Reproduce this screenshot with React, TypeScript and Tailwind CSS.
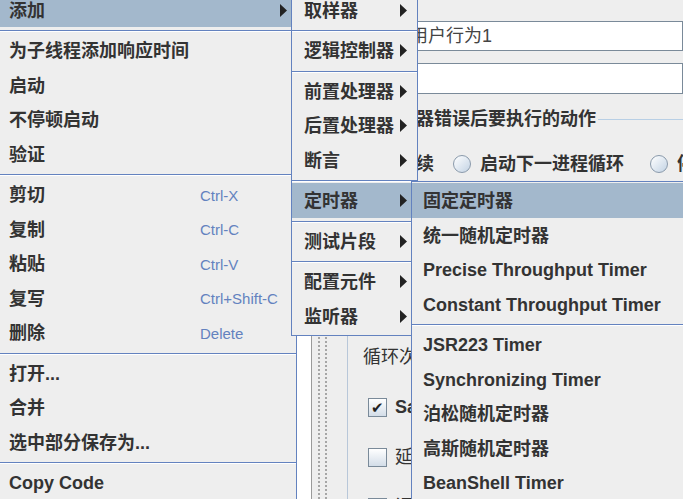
import React from "react";

type Entry =
  | { sep: true }
  | { label: string; shortcut?: string; arrow?: boolean; active?: boolean };

const mainMenu: Entry[] = [
  { label: "添加", arrow: true, active: true },
  { sep: true },
  { label: "为子线程添加响应时间" },
  { label: "启动" },
  { label: "不停顿启动" },
  { label: "验证" },
  { sep: true },
  { label: "剪切", shortcut: "Ctrl-X" },
  { label: "复制", shortcut: "Ctrl-C" },
  { label: "粘贴", shortcut: "Ctrl-V" },
  { label: "复写", shortcut: "Ctrl+Shift-C" },
  { label: "删除", shortcut: "Delete" },
  { sep: true },
  { label: "打开..." },
  { label: "合并" },
  { label: "选中部分保存为..." },
  { sep: true },
  { label: "Copy Code" },
];

const addMenu: Entry[] = [
  { label: "取样器", arrow: true },
  { sep: true },
  { label: "逻辑控制器", arrow: true },
  { sep: true },
  { label: "前置处理器", arrow: true },
  { label: "后置处理器", arrow: true },
  { label: "断言", arrow: true },
  { sep: true },
  { label: "定时器", arrow: true, active: true },
  { sep: true },
  { label: "测试片段", arrow: true },
  { sep: true },
  { label: "配置元件", arrow: true },
  { label: "监听器", arrow: true },
];

const timerMenu: Entry[] = [
  { label: "固定定时器", active: true },
  { label: "统一随机定时器" },
  { label: "Precise Throughput Timer" },
  { label: "Constant Throughput Timer" },
  { sep: true },
  { label: "JSR223 Timer" },
  { label: "Synchronizing Timer" },
  { label: "泊松随机定时器" },
  { label: "高斯随机定时器" },
  { label: "BeanShell Timer" },
];

function Arrow() {
  return (
    <svg width="7" height="13" viewBox="0 0 7 13" className="block shrink-0">
      <polygon points="0,0 7,6.5 0,13" fill="#222" />
    </svg>
  );
}

function Separator() {
  return (
    <div className="h-[6px] pt-[3px]">
      <div className="h-px bg-[#6382bf]" />
      <div className="h-px bg-white" />
    </div>
  );
}

function MenuList({ items, pl, pr, shortcutAt }: { items: Entry[]; pl: string; pr: string; shortcutAt?: string }) {
  return (
    <>
      {items.map((it, i) =>
        "sep" in it ? (
          <Separator key={i} />
        ) : (
          <div
            key={i}
            className={`flex h-[34.5px] items-center whitespace-nowrap pt-[3px] ${pl} ${pr} ${it.active ? "bg-[#a3b8cc]" : ""}`}
          >
            <span className={`text-[18px] font-bold text-[#333] ${shortcutAt ?? ""}`}>{it.label}</span>
            {it.shortcut && <span className="text-[15px] text-[#6382bf]">{it.shortcut}</span>}
            {it.arrow && (
              <span className="ml-auto -mt-[2px]">
                <Arrow />
              </span>
            )}
          </div>
        )
      )}
    </>
  );
}

function Radio() {
  return (
    <span className="block h-[18px] w-[18px] shrink-0 rounded-full border border-[#8a9aab] bg-gradient-to-br from-white to-[#c3d3e4]" />
  );
}

function Check({ checked }: { checked?: boolean }) {
  return (
    <span className="flex h-[19px] w-[19px] shrink-0 items-center justify-center border border-[#7a8a99] bg-gradient-to-b from-white to-[#d3dde8] text-[15px] leading-none text-[#222]">
      {checked ? "✔" : ""}
    </span>
  );
}

export default function App() {
  return (
    <div className="relative h-[499px] w-[683px] overflow-hidden bg-[#eeeeee] font-['Liberation_Sans','Noto_Sans_CJK_SC',sans-serif] text-[#333]">
      {/* JMeter window behind the popups */}
      <div className="flex h-full">
        <div className="w-[312px] border-r border-[#9a9a9a] bg-white" />
        <div className="w-[6px]" />
        <div className="w-[9px] border-x-2 border-dotted border-[#a6a6a6]" />
        <div className="w-[21px] border-r border-[#b8c7d9] bg-[#eeeeee]" />
        <div className="flex min-w-0 flex-1 flex-col text-[18px]">
          <div className="mt-[21px] flex h-[30px] items-stretch pl-[15px]">
            <span className="flex w-[43px] shrink-0 items-center font-bold">名称：</span>
            <div className="flex flex-1 items-center whitespace-nowrap border border-[#7a8a99] bg-white pl-[3px] text-[#444]">用户行为1</div>
          </div>
          <div className="mt-[12px] flex h-[31px] items-stretch pl-[15px]">
            <span className="flex w-[43px] shrink-0 items-center font-bold">注释：</span>
            <div className="flex-1 border border-[#7a8a99] bg-white" />
          </div>
          <div className="mt-[15px] flex h-[20px] items-center pl-[14px]">
            <span className="whitespace-nowrap font-bold">在取样器错误后要执行的动作</span>
            <div className="ml-[2px] h-px flex-1 bg-[#b8cfe5]" />
          </div>
          <div className="mt-[25px] flex h-[20px] items-center whitespace-nowrap pl-[23px] font-bold">
            <Radio />
            <span className="ml-[9px] w-[36px] shrink-0">继续</span>
            <span className="ml-[19px]"><Radio /></span>
            <span className="ml-[9px] w-[144px] shrink-0">启动下一进程循环</span>
            <span className="ml-[26px]"><Radio /></span>
            <span className="ml-[9px]">停止线程</span>
          </div>
          <div className="mt-[173px] flex h-[20px] items-center pl-[15px]">
            <span className="whitespace-nowrap">循环次数</span>
          </div>
          <div className="mt-[30px] flex h-[20px] items-center gap-[8px] whitespace-nowrap pl-[20px]">
            <Check checked />
            <span className="font-bold">Same user on each iteration</span>
          </div>
          <div className="mt-[30px] flex h-[20px] items-center gap-[8px] whitespace-nowrap pl-[20px]">
            <Check />
            <span>延迟创建线程直到需要</span>
          </div>
          <div className="mt-[30px] flex h-[20px] items-center gap-[8px] whitespace-nowrap pl-[20px]">
            <Check />
            <span>调度器</span>
          </div>
        </div>
      </div>

      {/* context menu */}
      <div className="absolute left-0 top-[-7.5px] w-[297px] border-r border-[#6382bf] bg-[#eeeeee]">
        <MenuList items={mainMenu} pl="pl-[9px]" pr="pr-[9px]" shortcutAt="w-[191px] shrink-0" />
      </div>

      {/* 添加 submenu */}
      <div className="absolute left-[291px] top-[-7.5px] w-[127px] border-x border-b border-[#6382bf] bg-[#eeeeee] pb-[2px]">
        <MenuList items={addMenu} pl="pl-[12px]" pr="pr-[10px]" />
      </div>

      {/* 定时器 submenu */}
      <div className="absolute left-[411px] top-[181px] w-[300px] border-l border-t border-[#6382bf] bg-[#eeeeee] pt-[1px]">
        <MenuList items={timerMenu} pl="pl-[11px]" pr="pr-[10px]" />
      </div>
    </div>
  );
}
